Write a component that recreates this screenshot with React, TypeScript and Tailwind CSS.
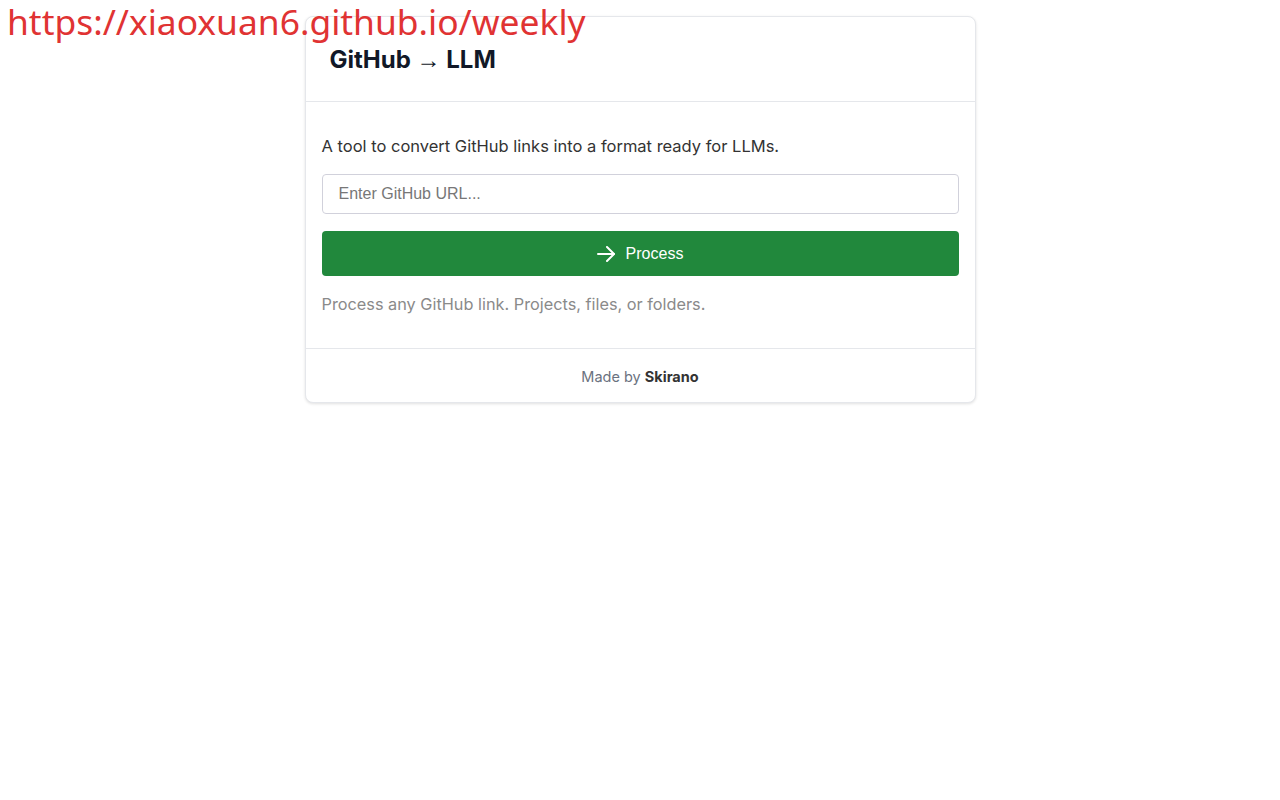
export default function App() {
  return (
    <div className="relative min-h-screen bg-white font-['Inter',sans-serif]">
      <div className="pointer-events-none absolute left-[7px] top-0 z-10 font-['Noto_Sans',sans-serif] text-[35.4px] leading-[42px] text-[#e03333]">
        https://xiaoxuan6.github.io/weekly
      </div>

      <div className="flex justify-center pt-4">
        <div className="w-[671px] overflow-hidden rounded-lg border border-gray-200 bg-white shadow-[0_1px_3px_rgba(0,0,0,0.12)]">
          <div className="border-b border-gray-200 px-6 pt-[27px] pb-[25px]">
            <h1 className="text-[24px] leading-[32px] font-bold text-[#111827]">
              GitHub{" "}
              <span className="font-['Liberation_Sans',sans-serif] font-normal">→</span>{" "}
              LLM
            </h1>
          </div>

          <div className="px-4 pt-[32px] pb-[32px]">
            <p className="text-[16.5px] leading-[24px] text-[#333]">
              A tool to convert GitHub links into a format ready for LLMs.
            </p>
            <input
              type="text"
              placeholder="Enter GitHub URL..."
              className="mt-4 block h-10 w-full rounded border border-[#d1d1db] bg-white px-4 font-['Liberation_Sans',sans-serif] text-[16px] text-[#333] placeholder:text-[#777] outline-none"
            />
            <button className="mt-[17px] flex h-[45px] w-full items-center justify-center gap-[10px] rounded bg-[#21883c] font-['Liberation_Sans',sans-serif] text-[16px] text-white">
              <svg width="19" height="16" viewBox="0 0 19 16" fill="none" stroke="currentColor" strokeWidth="2" strokeLinecap="round" strokeLinejoin="round">
                <path d="M1 8h16" />
                <path d="M10 1l7 7-7 7" />
              </svg>
              <span>Process</span>
            </button>
            <p className="mt-4 text-[16.3px] leading-[24px] text-[#8a8a8a]">
              Process any GitHub link. Projects, files, or folders.
            </p>
          </div>

          <div className="border-t border-gray-200 pt-[18px] pb-[15px] text-center text-[14.5px] leading-[20px] text-[#6b7280]">
            Made by <span className="font-bold text-[#333]">Skirano</span>
          </div>
        </div>
      </div>
    </div>
  );
}
